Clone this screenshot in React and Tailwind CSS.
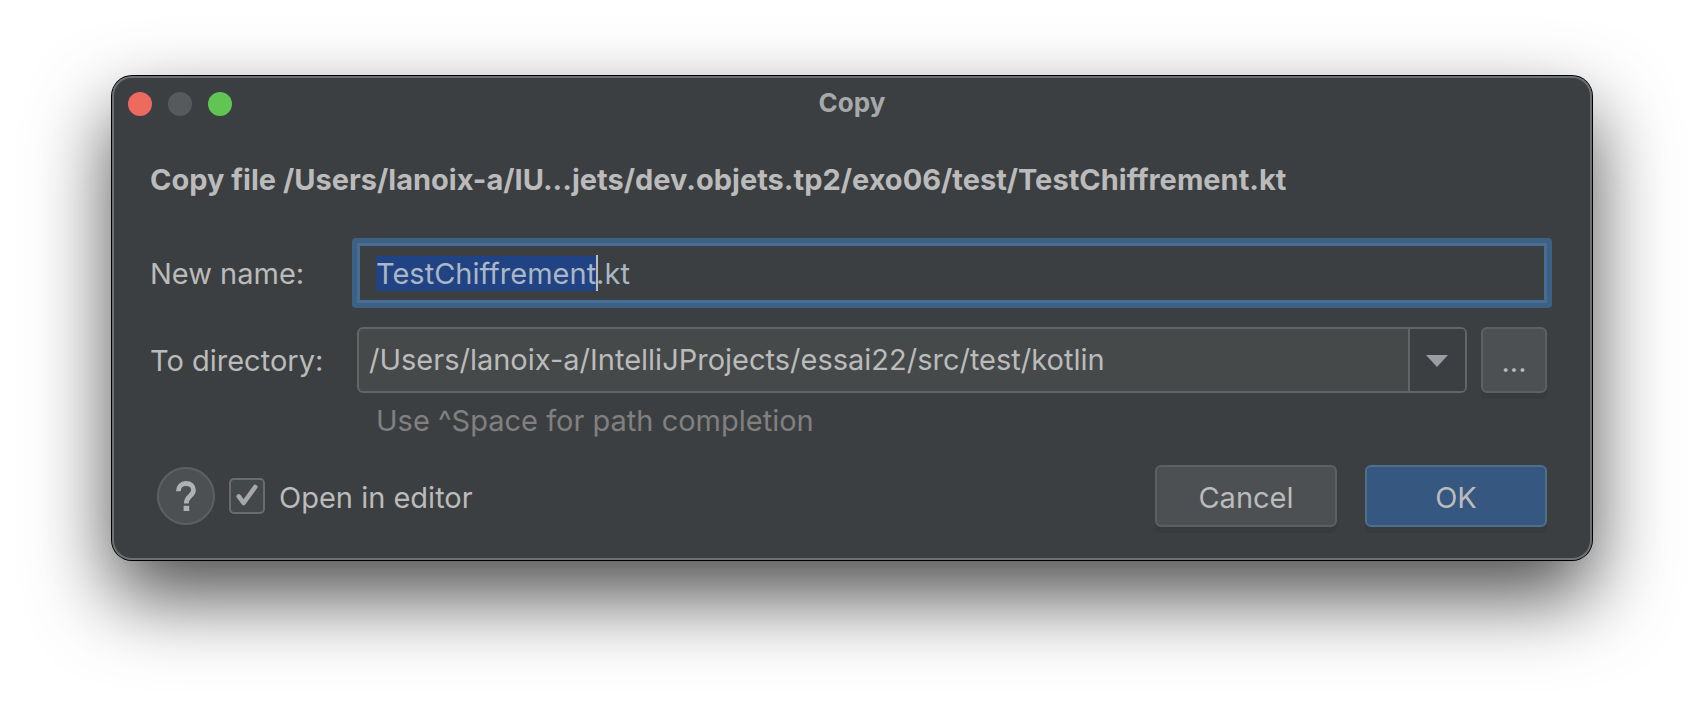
import { useEffect, useRef, useState } from "react";

const TEXT = "text-[29px] leading-[36px]";

function TitleBar({ title }) {
  return (
    <header className="grid h-14 grid-cols-[1fr_auto_1fr] items-center px-4">
      <div className="flex gap-4">
        <button type="button" aria-label="Close" className="size-6 rounded-full bg-[#ed6a5f]" />
        <button type="button" aria-label="Minimize" disabled className="size-6 rounded-full bg-[#565a5c]" />
        <button type="button" aria-label="Zoom" className="size-6 rounded-full bg-[#61c554]" />
      </div>
      <h1 className="pb-0.5 text-[26px] leading-[36px] font-bold text-[#a6a8a9]">{title}</h1>
    </header>
  );
}

function NameField({ id, initial }) {
  const ref = useRef(null);
  const [value, setValue] = useState(initial);
  const [caret, setCaret] = useState(null);

  useEffect(() => {
    const input = ref.current;
    const stem = initial.slice(0, initial.lastIndexOf("."));
    input.focus();
    input.setSelectionRange(0, stem.length);
    const style = getComputedStyle(input);
    const pen = document.createElement("canvas").getContext("2d");
    pen.font = `${style.fontWeight} ${style.fontSize} ${style.fontFamily}`;
    const start = parseFloat(style.paddingLeft) + parseFloat(style.borderLeftWidth);
    setCaret(Math.round(start + pen.measureText(stem).width));
  }, [initial]);

  return (
    <div className="-m-[5px] rounded bg-[#3d6185] p-[5px]">
      <div className="relative">
        <input
          ref={ref}
          id={id}
          type="text"
          value={value}
          spellCheck={false}
          onChange={(e) => {
            setValue(e.target.value);
            setCaret(null);
          }}
          className={`${TEXT} block h-[60px] w-full border-[3px] border-[#466d94] bg-[#3c3f41] px-4 text-[#a9b7c6] outline-none selection:bg-[#214283] selection:text-[#a9b7c6]`}
        />
        {caret !== null && (
          <span aria-hidden="true" className="absolute top-3 h-9 w-0.5 bg-[#bbbbbb]" style={{ left: caret }} />
        )}
      </div>
    </div>
  );
}

function DirectoryField({ id, initial }) {
  return (
    <div className="flex gap-3.5">
      <div className="flex h-[66px] min-w-0 flex-1 overflow-hidden rounded-md border-2 border-[#646464] bg-[#45494a]">
        <input
          id={id}
          type="text"
          defaultValue={initial}
          spellCheck={false}
          className={`${TEXT} min-w-0 flex-1 bg-transparent px-2.5 text-[#bbbbbb] outline-none`}
        />
        <button
          type="button"
          aria-label="Show recent directories"
          className="flex w-[57px] items-center justify-center border-l-2 border-[#646464] bg-[#3c3f41] pt-0.5 pr-0.5"
        >
          <svg width="22" height="12" viewBox="0 0 22 12" aria-hidden="true">
            <path d="M0 0H22L11 12Z" fill="#9a9da1" />
          </svg>
        </button>
      </div>
      <button
        type="button"
        aria-label="Browse"
        className={`${TEXT} flex size-[66px] items-center justify-center rounded-md border-2 border-[#5e6060] bg-[#4c5052] pt-1 text-[#bbbbbb] shadow-[0_6px_0_#383a3b]`}
      >
        ...
      </button>
    </div>
  );
}

function HelpButton() {
  return (
    <button
      type="button"
      aria-label="Help"
      className="flex size-[58px] items-center justify-center rounded-full border-2 border-[#5e6060] bg-[#4c5052]"
    >
      <svg width="22" height="30" viewBox="0 0 22 30" fill="none" aria-hidden="true">
        <path
          d="M3.4 10.3C3.4 5.5 6.5 2.5 11 2.5C15.5 2.5 18.5 5.3 18.5 9C18.5 11.8 17 13.3 14.9 15.2C12.6 17.2 11.3 18.6 11.3 22.6"
          stroke="#afb1b3"
          strokeWidth="4.8"
        />
        <path d="M8.6 24.8H14.2V30H8.6Z" fill="#afb1b3" />
      </svg>
    </button>
  );
}

function Checkbox({ id, label }) {
  return (
    <div className="flex items-center gap-3.5">
      <span className="relative size-9">
        <input
          id={id}
          type="checkbox"
          defaultChecked
          className="peer size-9 appearance-none rounded-[5px] border-2 border-[#6b6b6b] bg-[#43494a]"
        />
        <svg
          className="pointer-events-none invisible absolute inset-0 peer-checked:visible"
          width="36"
          height="36"
          viewBox="0 0 36 36"
          fill="none"
          aria-hidden="true"
        >
          <path d="M9.8 18.4L14.6 25L26.2 9" stroke="#a7a7a7" strokeWidth="4.6" strokeLinecap="round" strokeLinejoin="round" />
        </svg>
      </span>
      <label htmlFor={id} className={`${TEXT} pt-1 text-[#bbbbbb]`}>
        {label}
      </label>
    </div>
  );
}

export default function App() {
  return (
    <main className="min-h-screen bg-white px-28 pt-[76px] font-['Inter',sans-serif]">
      <form
        onSubmit={(e) => e.preventDefault()}
        className="rounded-[20px] bg-[#3c3f41] shadow-[inset_0_0_0_2px_#6d6f70,0_0_0_1px_#000,0_36px_80px_rgba(0,0,0,0.7)]"
      >
        <TitleBar title="Copy" />
        <div className="pt-[30px] pr-[45px] pb-[33px] pl-[38px]">
          <h2 className={`${TEXT} truncate font-bold text-[#bbbbbb]`}>
            Copy file /Users/lanoix-a/IU...jets/dev.objets.tp2/exo06/test/TestChiffrement.kt
          </h2>
          <div className="mt-[45px] grid grid-cols-[207px_1fr] items-center gap-y-6">
            <label htmlFor="new-name" className={`${TEXT} pt-0.5 text-[#bbbbbb]`}>
              New name:
            </label>
            <NameField id="new-name" initial="TestChiffrement.kt" />
            <label htmlFor="directory" className={`${TEXT} pt-0.5 text-[#bbbbbb]`}>
              To directory:
            </label>
            <DirectoryField id="directory" initial="/Users/lanoix-a/IntelliJProjects/essai22/src/test/kotlin" />
          </div>
          <p className={`${TEXT} mt-[10px] ml-[226px] text-[#808080]`}>Use ^Space for path completion</p>
          <footer className="mt-[26px] flex items-center justify-between pl-[7px]">
            <div className="flex items-center gap-3.5">
              <HelpButton />
              <Checkbox id="open-in-editor" label="Open in editor" />
            </div>
            <div className="flex gap-7">
              <button
                type="button"
                className={`${TEXT} h-[62px] w-[182px] rounded-md border-2 border-[#5e6060] bg-[#4c5052] pt-1 text-[#bbbbbb] shadow-[0_6px_0_#383a3b]`}
              >
                Cancel
              </button>
              <button
                type="submit"
                className={`${TEXT} h-[62px] w-[182px] rounded-md border-2 border-[#4c708c] bg-[#365880] pt-1 text-[#bbbbbb] shadow-[0_6px_0_#383a3b]`}
              >
                OK
              </button>
            </div>
          </footer>
        </div>
      </form>
    </main>
  );
}
